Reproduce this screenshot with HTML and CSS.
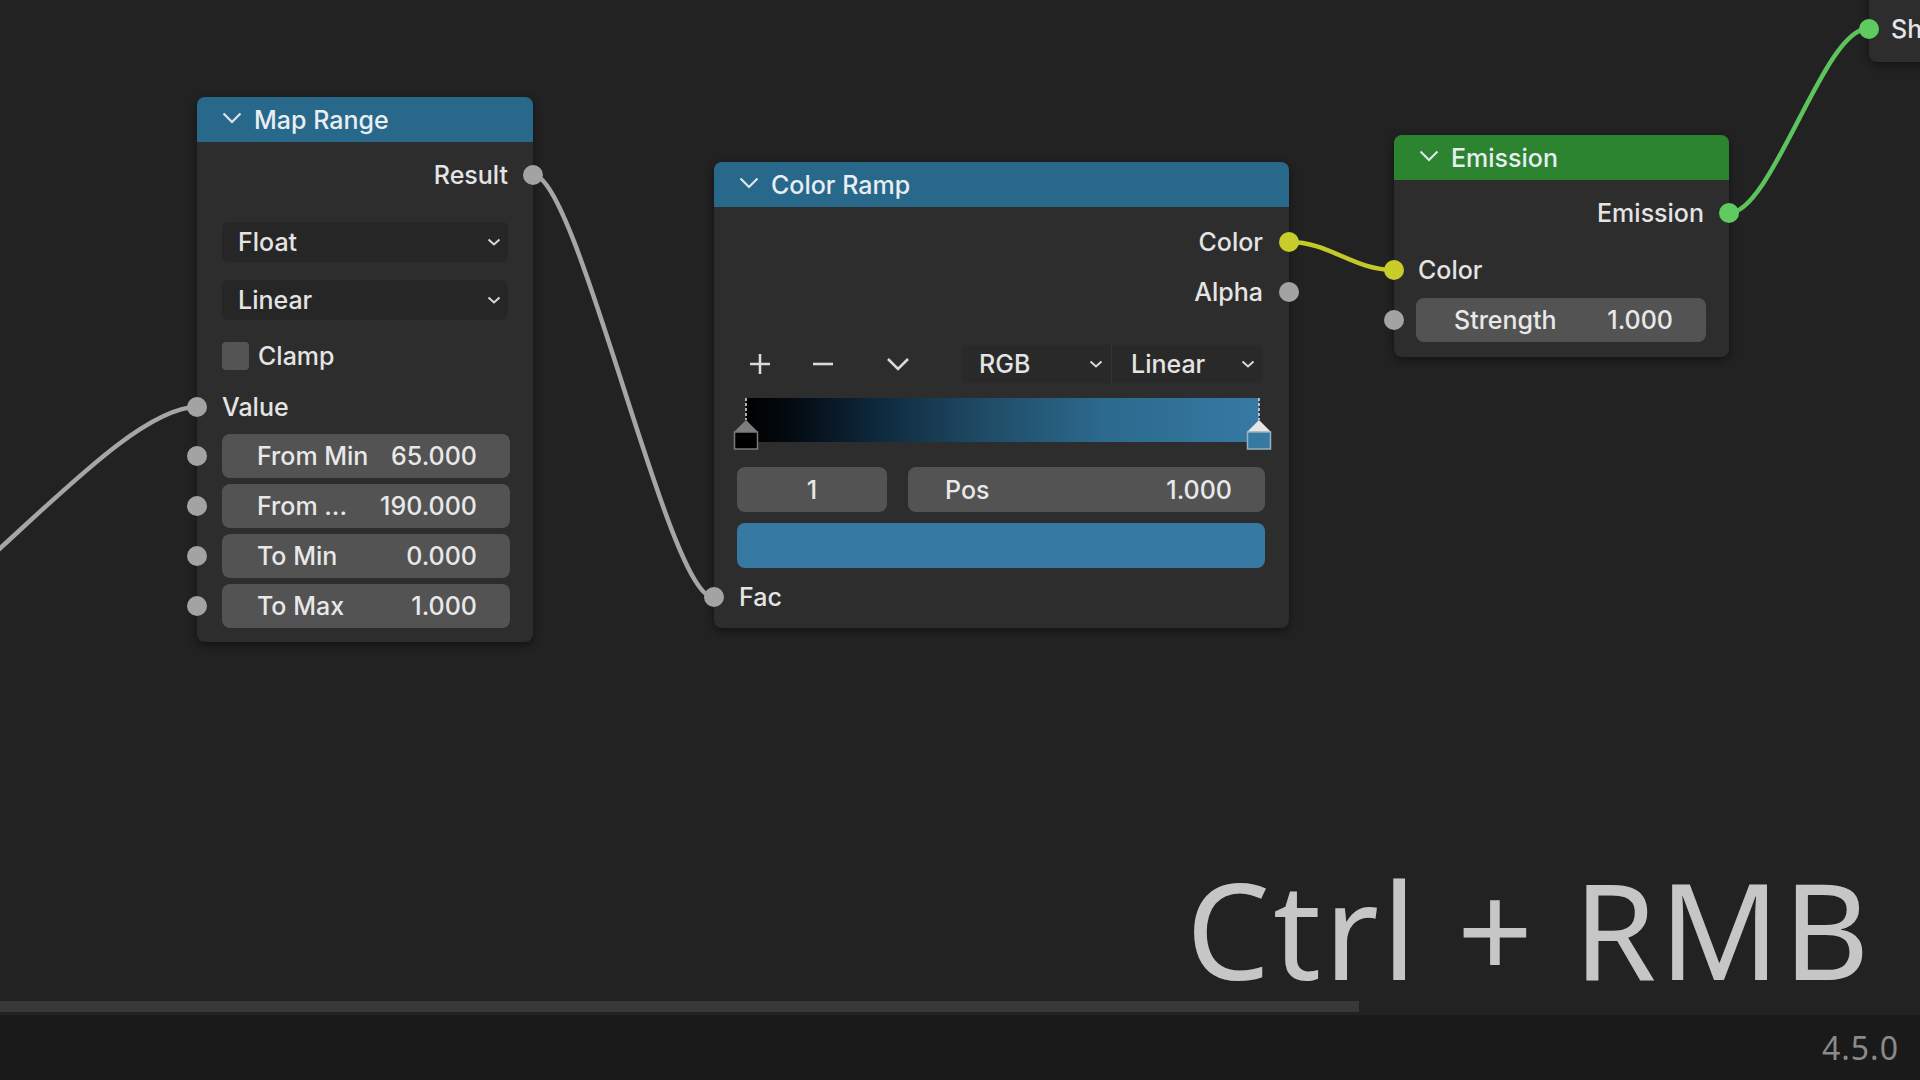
FILE: index.html
```html
<!DOCTYPE html>
<html lang="en">
<head>
    <meta charset="UTF-8">
    <title>Shader Editor</title>
    <link rel="stylesheet" href="styles.css">
</head>
<body>
<div class="editor">
    <div class="canvas">
        <svg class="links" width="1920" height="1015" viewBox="0 0 1920 1015">
            <path class="link grey" d="M -157 653 C -69 653, 109 407, 197 407"/>
            <path class="link grey" d="M 533 175 C 578 175, 668 597, 713 597"/>
            <path class="link yellow" d="M 1289 242 C 1330 242, 1353 270, 1394 270"/>
            <path class="link green" d="M 1729 213 C 1772 213, 1824 29, 1867 29"/>
        </svg>

        <!-- Map Range -->
        <div class="node map-range">
            <div class="header blue">
                <svg class="fold" width="20" height="12" viewBox="0 0 20 12"><polyline points="1.5,1.5 10,10 18.5,1.5"/></svg>
                Map Range
            </div>
            <div class="row out result">Result<span class="socket"></span></div>
            <div class="row select float">
                <div class="dropdown">Float<svg width="14" height="8" viewBox="0 0 14 8"><polyline points="1.5,1.5 7,6.5 12.5,1.5"/></svg></div>
            </div>
            <div class="row select linear">
                <div class="dropdown">Linear<svg width="14" height="8" viewBox="0 0 14 8"><polyline points="1.5,1.5 7,6.5 12.5,1.5"/></svg></div>
            </div>
            <div class="row in clamp"><span class="check"></span>Clamp</div>
            <div class="row in value"><span class="socket"></span>Value</div>
            <div class="row prop first"><span class="socket"></span><div class="field"><span>From Min</span><span>65.000</span></div></div>
            <div class="row prop"><span class="socket"></span><div class="field"><span>From ...</span><span>190.000</span></div></div>
            <div class="row prop"><span class="socket"></span><div class="field"><span>To Min</span><span>0.000</span></div></div>
            <div class="row prop"><span class="socket"></span><div class="field"><span>To Max</span><span>1.000</span></div></div>
        </div>

        <!-- Color Ramp -->
        <div class="node color-ramp">
            <div class="header blue">
                <svg class="fold" width="20" height="12" viewBox="0 0 20 12"><polyline points="1.5,1.5 10,10 18.5,1.5"/></svg>
                Color Ramp
            </div>
            <div class="row out color">Color<span class="socket yellow"></span></div>
            <div class="row out alpha">Alpha<span class="socket"></span></div>
            <div class="toolbar">
                <span class="tool add"><svg width="24" height="24" viewBox="0 0 24 24"><path d="M12 2 V22 M2 12 H22"/></svg></span>
                <span class="tool remove"><svg width="24" height="24" viewBox="0 0 24 24"><path d="M2 12 H22"/></svg></span>
                <span class="tool more"><svg width="24" height="14" viewBox="0 0 24 14"><polyline points="2,2 12,12 22,2"/></svg></span>
                <div class="menus">
                    <div class="menu rgb">RGB<svg width="14" height="8" viewBox="0 0 14 8"><polyline points="1.5,1.5 7,6.5 12.5,1.5"/></svg></div>
                    <div class="menu interp">Linear<svg width="14" height="8" viewBox="0 0 14 8"><polyline points="1.5,1.5 7,6.5 12.5,1.5"/></svg></div>
                </div>
            </div>
            <div class="ramp">
                <div class="bar"></div>
                <svg class="stop first" width="26" height="53" viewBox="0 0 26 53">
                    <line x1="13" y1="0" x2="13" y2="22"/>
                    <path class="roof" d="M1 34 L13 22 L25 34 Z"/>
                    <rect x="1.5" y="34" width="23" height="17"/>
                </svg>
                <svg class="stop last" width="26" height="53" viewBox="0 0 26 53">
                    <line x1="13" y1="0" x2="13" y2="22"/>
                    <path class="roof" d="M1 34 L13 22 L25 34 Z"/>
                    <rect x="1.5" y="34" width="23" height="17"/>
                </svg>
            </div>
            <div class="stop-props">
                <div class="field index">1</div>
                <div class="field pos"><span>Pos</span><span>1.000</span></div>
            </div>
            <div class="swatch"></div>
            <div class="row in fac"><span class="socket"></span>Fac</div>
        </div>

        <!-- Emission -->
        <div class="node emission">
            <div class="header green">
                <svg class="fold" width="20" height="12" viewBox="0 0 20 12"><polyline points="1.5,1.5 10,10 18.5,1.5"/></svg>
                Emission
            </div>
            <div class="row out emit">Emission<span class="socket green"></span></div>
            <div class="row in color">
                <span class="socket yellow"></span>Color
            </div>
            <div class="row prop strength"><span class="socket"></span><div class="field"><span>Strength</span><span>1.000</span></div></div>
        </div>

        <!-- output node, mostly off screen -->
        <div class="node output">
            <div class="row in shader"><span class="socket green"></span>Sh</div>
        </div>

        <div class="keys">Ctrl + RMB</div>
        <div class="scrollbar"></div>
    </div>
    <div class="statusbar">4.5.0</div>
</div>
</body>
</html>
```

FILE: styles.css
```css
*{
    margin:0;
    padding:0;
    box-sizing:border-box;
}

body{
    width:1920px;
    height:1080px;
    overflow:hidden;
    background:#222222;
    font-family:Inter, "Noto Sans", sans-serif;
}

.editor{
    display:flex;
    flex-direction:column;
    height:100%;
}
.canvas{
    position:relative;
    height:1015px;
    background:#222222;
}
.statusbar{
    height:65px;
    background:#1a1a1a;
    display:flex;
    align-items:center;
    justify-content:flex-end;
    padding-right:21px;
    font-family:"Noto Sans", sans-serif;
    font-size:32px;
    letter-spacing:1px;
    color:#8a8a8a;
}
.scrollbar{
    position:absolute;
    left:0;
    bottom:3px;
    width:1359px;
    height:11px;
    background:#383838;
}

/* links */
.links{
    position:absolute;
    left:0;
    top:0;
}
.link{
    fill:none;
    stroke-width:4.5;
    stroke-linecap:round;
}
.link.grey{ stroke:#a6a6a6; }
.link.yellow{ stroke:#c4c92a; }
.link.green{ stroke:#5cc45c; }

/* nodes */
.node{
    position:absolute;
    display:flex;
    flex-direction:column;
    background:#2d2d2d;
    border-radius:8px;
    box-shadow:0 3px 10px rgba(0,0,0,0.45);
    font-size:25px;
    font-weight:500;
    color:#e4e4e4;
}
.node .header{
    height:45px;
    flex:none;
    display:flex;
    align-items:center;
    gap:12px;
    padding-left:25px;
    border-radius:8px 8px 0 0;
    color:#e8eef2;
}
.node .header.blue{ background:#27688b; }
.node .header.green{ background:#2c8431; }
.node .header .fold{
    fill:none;
    stroke:#dfe6ea;
    stroke-width:2.2;
    margin-top:-3px;
}

.row{
    position:relative;
    flex:none;
    height:40px;
    display:flex;
    align-items:center;
}
.row.out{
    justify-content:flex-end;
    padding-right:25px;
}
.row.in{
    padding-left:25px;
}
.row.prop{
    height:44px;
    margin-top:6px;
    padding:0 23px 0 25px;
}
.socket{
    position:absolute;
    top:50%;
    width:20px;
    height:20px;
    margin-top:-10px;
    border-radius:50%;
    background:#a3a3a3;
}
.row.out .socket{ right:-10px; }
.row.in .socket,
.row.prop .socket{ left:-10px; }
.socket.yellow{ background:#c9cc2b; }
.socket.green{ background:#5fcb5f; }

.field{
    flex:1;
    height:100%;
    display:flex;
    align-items:center;
    justify-content:space-between;
    padding:0 33px 0 35px;
    background:#535353;
    border-radius:8px;
    color:#e8e8e8;
}

/* map range */
.map-range{
    left:197px;
    top:97px;
    width:336px;
    height:545px;
}
.map-range .result{ margin-top:13px; }
.map-range .select{
    padding:0 25px;
}
.map-range .float{ margin-top:27px; }
.map-range .linear{ margin-top:18px; }
.map-range .dropdown{
    flex:1;
    height:100%;
    display:flex;
    align-items:center;
    justify-content:space-between;
    padding:0 7px 0 16px;
    background:#262626;
    border-radius:6px;
}
.dropdown svg,
.menu svg{
    fill:none;
    stroke:#d8d8d8;
    stroke-width:2;
}
.map-range .clamp{
    margin-top:16px;
    gap:9px;
}
.map-range .check{
    width:27px;
    height:28px;
    background:#545454;
    border-radius:4px;
}
.map-range .value{ margin-top:11px; }
.map-range .prop.first{ margin-top:7px; }

/* color ramp */
.color-ramp{
    left:714px;
    top:162px;
    width:575px;
    height:466px;
}
.color-ramp .color{
    margin-top:15px;
    padding-right:26px;
}
.color-ramp .alpha{
    margin-top:10px;
    padding-right:26px;
}
.toolbar{
    flex:none;
    display:flex;
    align-items:center;
    height:40px;
    margin-top:32px;
    padding:0 26px 0 23px;
}
.toolbar .tool{
    width:46px;
    height:38px;
    display:flex;
    align-items:center;
    justify-content:center;
}
.toolbar .tool svg{
    fill:none;
    stroke:#dadada;
    stroke-width:2.6;
}
.toolbar .remove{ margin-left:17px; }
.toolbar .more{ margin-left:29px; }
.toolbar .menus{
    display:flex;
    height:38px;
    margin-left:41px;
    flex:1;
}
.toolbar .menu{
    flex:1;
    display:flex;
    align-items:center;
    justify-content:space-between;
    background:#292929;
    padding:0 8px 0 17px;
}
.toolbar .menu.rgb{
    border-radius:6px 0 0 6px;
    border-right:1px solid #333333;
}
.toolbar .menu.interp{
    border-radius:0 6px 6px 0;
    padding-left:19px;
}

.ramp{
    position:relative;
    flex:none;
    height:54px;
    margin:14px 30px 0 32px;
}
.ramp .bar{
    height:44px;
    background:linear-gradient(to right, #000000 0%, #040c14 10%, #0d283b 25%, #1e4963 45%, #2c6a8e 70%, #3679a3 100%);
}
.ramp .stop{
    position:absolute;
    top:0;
}
.ramp .stop line{
    stroke:#e0e0e0;
    stroke-width:1.5;
    stroke-dasharray:3 2;
}
.ramp .stop.first{ left:-13px; }
.ramp .stop.last{ right:-13px; }
.ramp .stop.first .roof{ fill:#7e7e7e; }
.ramp .stop.first rect{
    fill:#000000;
    stroke:#7a7a7a;
    stroke-width:1.5;
}
.ramp .stop.last .roof{ fill:#e6e6e6; }
.ramp .stop.last rect{
    fill:#3679a3;
    stroke:#9ab0bf;
    stroke-width:1.5;
}

.stop-props{
    flex:none;
    display:flex;
    gap:21px;
    height:45px;
    margin-top:15px;
    padding:0 24px 0 23px;
}
.stop-props .index{
    flex:none;
    width:150px;
    justify-content:center;
    padding:0;
}
.stop-props .pos{
    padding:0 33px 0 37px;
}
.swatch{
    flex:none;
    height:45px;
    margin:11px 24px 0 23px;
    background:#3679a3;
    border-radius:8px;
}
.color-ramp .fac{ margin-top:9px; }

/* emission */
.emission{
    left:1394px;
    top:135px;
    width:335px;
    height:222px;
}
.emission .emit{ margin-top:13px; }
.emission .color{ margin-top:17px; padding-left:24px; }
.emission .strength{
    margin-top:8px;
    padding:0 23px 0 22px;
}
.emission .strength .field{
    padding:0 33px 0 38px;
}

.output{
    left:1869px;
    top:-11px;
    width:90px;
    height:73px;
    padding-top:20px;
}
.output .shader{ padding-left:22px; }

/* key overlay */
.keys{
    position:absolute;
    left:1186px;
    top:862px;
    font-family:"Noto Sans", sans-serif;
    font-size:133px;
    line-height:1;
    letter-spacing:3px;
    color:#c6c6c6;
    white-space:nowrap;
}
```
